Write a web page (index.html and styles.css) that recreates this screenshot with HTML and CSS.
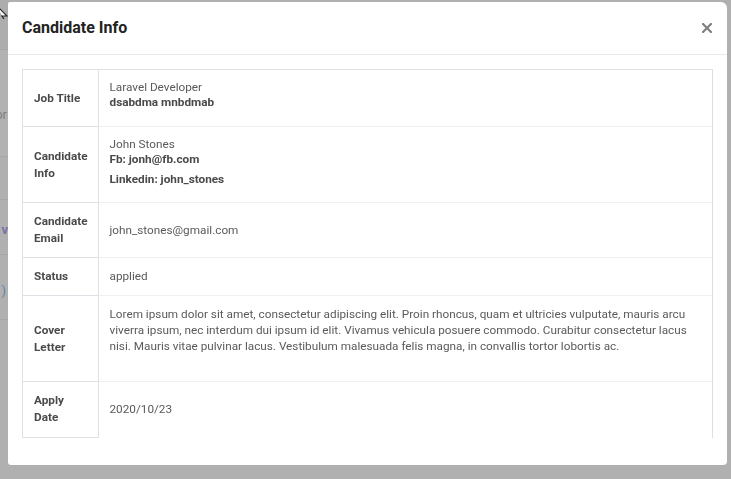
FILE: index.html
```html
<!DOCTYPE html>
<html lang="en">
<head>
<meta charset="utf-8">
<title>Candidate Info</title>
<link rel="stylesheet" href="styles.css">
</head>
<body>
<div class="page">
  <div class="strip">
    <div class="srow s1"></div>
    <div class="srow s2"><span class="t-gray">or</span></div>
    <div class="srow s3"></div>
    <div class="srow s4"><span class="t-purple">v</span></div>
    <div class="srow s5"><span class="t-blue">)</span></div>
    <div class="srow s6"></div>
  </div>
</div>

<div class="backdrop">
  <div class="modal">
    <div class="modal-header">
      <h5 class="modal-title">Candidate Info</h5>
      <button class="close" type="button" aria-label="Close">
        <svg width="10" height="10" viewBox="0 0 10 10"><path d="M1 1 L9 9 M9 1 L1 9" stroke="#7f7f7f" stroke-width="2.2" stroke-linecap="square"/></svg>
      </button>
    </div>
    <div class="modal-body">
      <table class="info">
        <tr>
          <th>Job Title</th>
          <td class="top"><div class="stack"><div>Laravel Developer</div><div class="b">dsabdma mnbdmab</div></div></td>
        </tr>
        <tr>
          <th>Candidate Info</th>
          <td class="top"><div class="stack s-info"><div>John Stones</div><div class="b">Fb: jonh@fb.com</div><div class="b gap">Linkedin: john_stones</div></div></td>
        </tr>
        <tr>
          <th>Candidate Email</th>
          <td>john_stones@gmail.com</td>
        </tr>
        <tr>
          <th>Status</th>
          <td>applied</td>
        </tr>
        <tr>
          <th>Cover Letter</th>
          <td class="top"><p class="letter">Lorem ipsum dolor sit amet, consectetur adipiscing elit. Proin rhoncus, quam et ultricies vulputate, mauris arcu viverra ipsum, nec interdum dui ipsum id elit. Vivamus vehicula posuere commodo. Curabitur consectetur lacus nisi. Mauris vitae pulvinar lacus. Vestibulum malesuada felis magna, in convallis tortor lobortis ac.</p></td>
        </tr>
        <tr class="last">
          <th>Apply Date</th>
          <td>2020/10/23</td>
        </tr>
      </table>
    </div>
  </div>
</div>

<svg class="cursor" width="8" height="14" viewBox="0 0 8 14"><path d="M-4 0 L7 11 L2 11 L4 14" fill="#fff" stroke="#222" stroke-width="1.2"/></svg>
</body>
</html>
```

FILE: styles.css
```css
* { box-sizing: border-box; }

html, body {
  margin: 0;
  padding: 0;
  width: 731px;
  height: 479px;
  overflow: hidden;
  background: #b0b0b0;
  font-family: Roboto, "Liberation Sans", Arial, sans-serif;
}

.page {
  width: 731px;
  height: 479px;
}

.strip {
  width: 8px;
  overflow: hidden;
  display: flex;
  flex-direction: column;
}

.srow {
  display: flex;
  justify-content: flex-end;
  align-items: flex-start;
  white-space: nowrap;
  font-size: 13px;
  line-height: 16px;
  border-bottom: 1px solid #a7a7a7;
}

.s1 { height: 50px; background: #adadad; }
.s2 { height: 107px; padding-top: 57px; background: #b2b2b2; }
.s3 { height: 43px; }
.s4 { height: 55px; padding-top: 22px; font-weight: bold; }
.s5 { height: 65px; padding-top: 28px; }
.s6 { height: 159px; border-bottom: none; }

.t-gray { color: #7f7f7f; margin-right: 1px; }
.t-purple { color: #7b70a6; margin-right: 0; }
.t-blue { color: #5f86a8; margin-right: 2px; }

.backdrop {
  position: fixed;
  inset: 0;
  padding: 2px 4px 0 8px;
}

.modal {
  width: 719px;
  height: 463px;
  background: #fff;
  border-radius: 2px 6px 4px 3px;
  display: flex;
  flex-direction: column;
}

.modal-header {
  height: 53px;
  flex: none;
  display: flex;
  align-items: center;
  justify-content: space-between;
  padding: 0 14px 1px 14px;
  border-bottom: 1px solid #e7e9ec;
}

.modal-title {
  margin: 0;
  font-size: 16px;
  font-weight: 700;
  color: #232323;
  line-height: 20px;
}

.close {
  border: 0;
  background: none;
  padding: 0;
  margin-right: 1px;
  width: 10px;
  height: 10px;
  display: flex;
}

.modal-body {
  padding: 14px 14px 28px 14px;
}

.info {
  width: 100%;
  border-collapse: collapse;
  font-size: 11.75px;
}

.info th {
  width: 53px;
  padding: 10px 10px 10px 11px;
  text-align: left;
  vertical-align: middle;
  font-weight: 700;
  color: #4a4a4a;
  line-height: 17px;
  border: 1px solid #dfe1e7;
}

.info td {
  padding: 10px 12px 10px 11px;
  vertical-align: middle;
  color: #5a5a5a;
  line-height: 17px;
  border-top: 1px solid #f0f0f2;
  border-right: 1px solid #dcdee3;
}

.info tr:first-child td { border-top-color: #dfe1e7; }

.info tr.last th,
.info tr.last td { padding-bottom: 11px; }

.info td.top { vertical-align: top; }

.stack { line-height: 15px; padding-bottom: 6px; }
.stack.s-info { padding-bottom: 5px; }
.stack .b { font-weight: 700; color: #4a4a4a; }
.stack .gap { margin-top: 5px; }

.letter {
  margin: 0 0 17px 0;
  line-height: 16px;
}

.cursor {
  position: fixed;
  left: 0;
  top: 5px;
}
```
